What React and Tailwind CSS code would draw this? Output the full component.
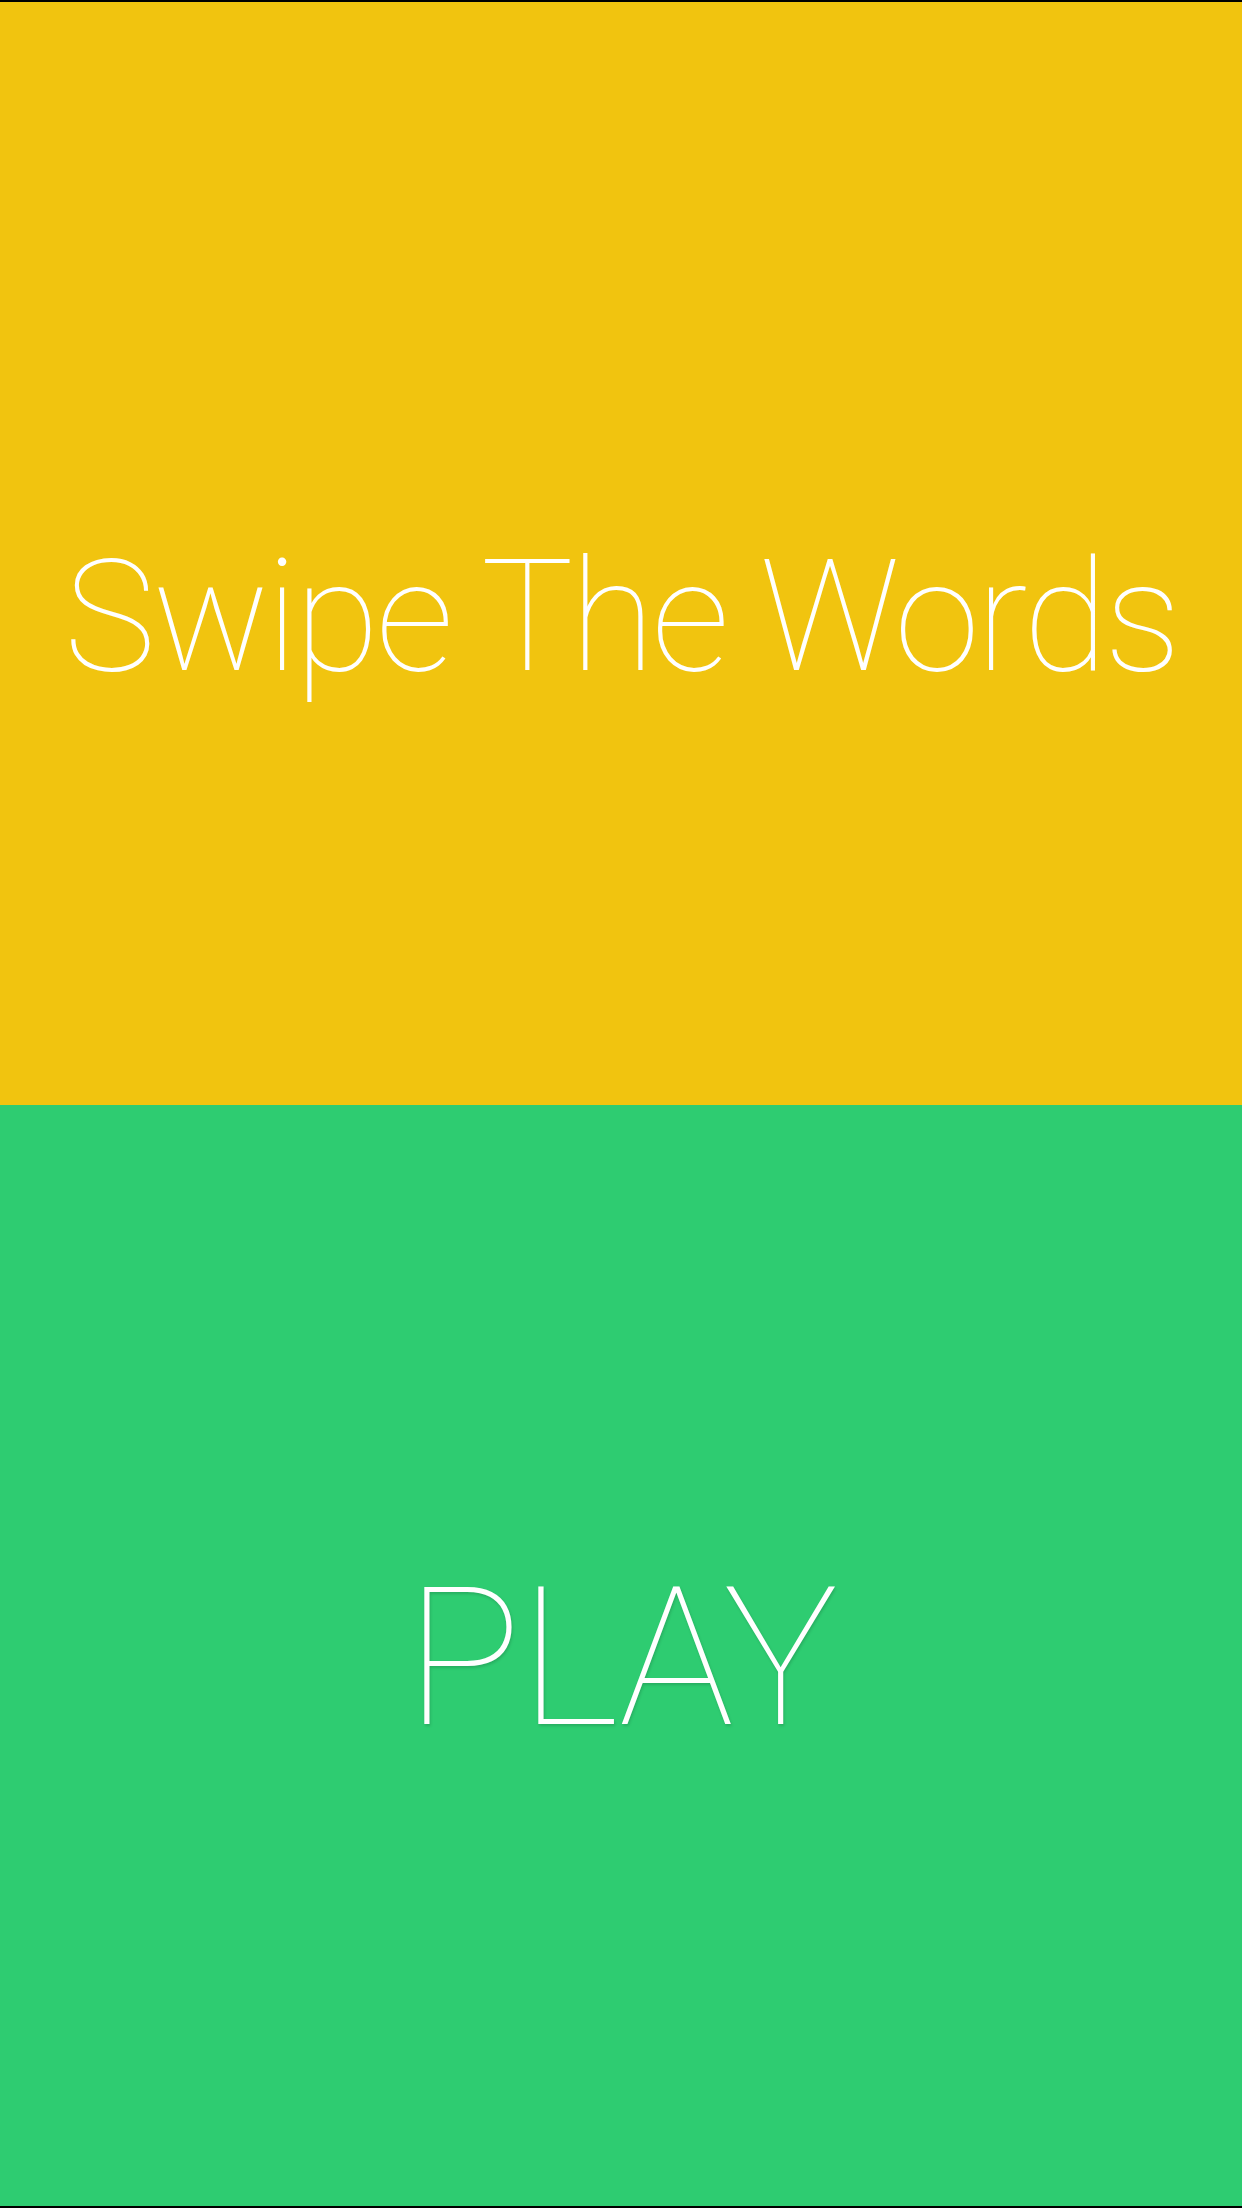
import React from "react";

const App = () => {
  return (
    <div className="w-[1242px] h-[2208px] flex flex-col bg-black py-[2px] font-['Roboto','Liberation_Sans',sans-serif] text-white">
      <div className="h-[1103px] bg-[#f1c40f] flex flex-col items-center pt-[538px]">
        <h1 className="text-[155px] font-thin leading-none tracking-[-3.5px] whitespace-nowrap">Swipe The Words</h1>
      </div>
      <div className="h-[1101px] bg-[#2ecc71] flex flex-col items-center pt-[457px]">
        <button className="text-[193px] font-thin leading-none tracking-[-2px] whitespace-nowrap [text-shadow:1px_2px_3px_rgba(0,0,0,0.15)]">
          PLAY
        </button>
      </div>
    </div>
  );
};

export default App;
